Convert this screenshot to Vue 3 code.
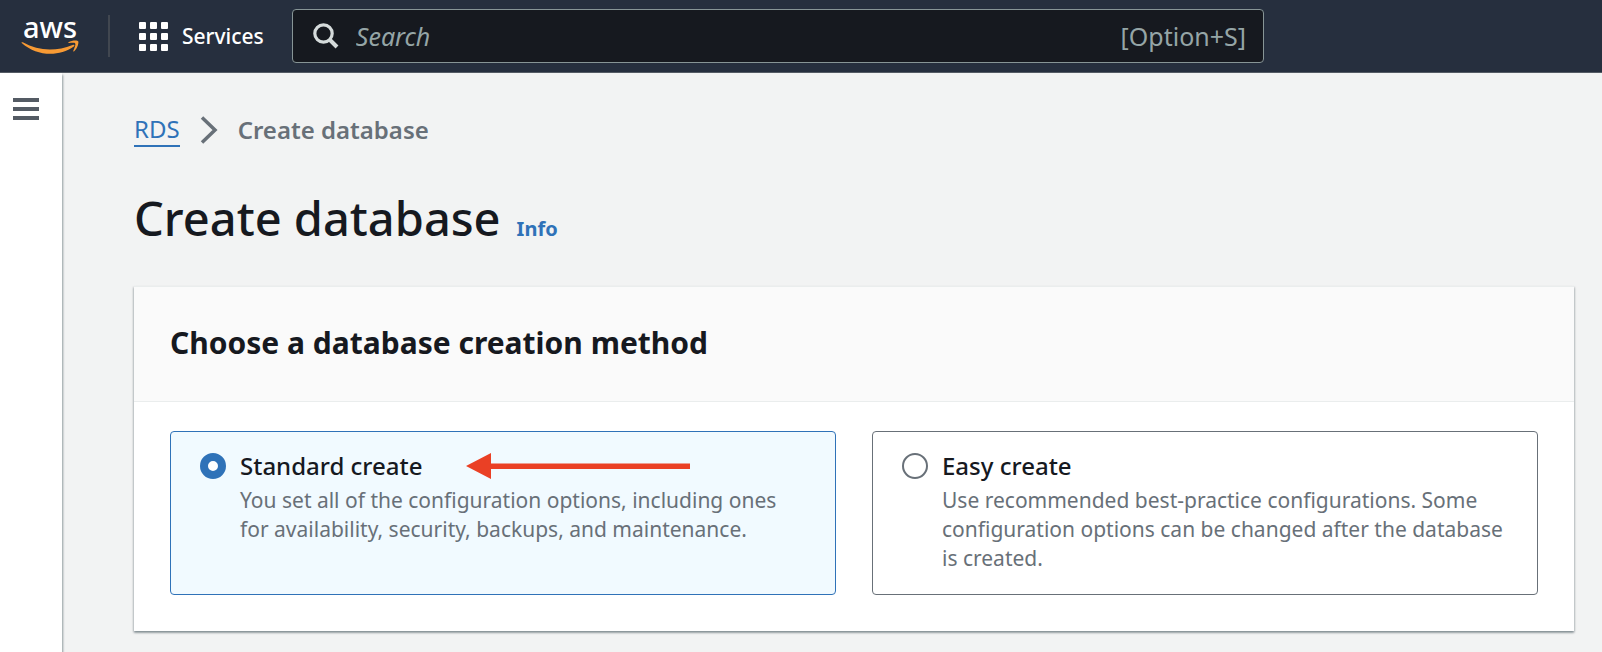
<script setup>
import { ref } from 'vue'

const method = ref('standard')
const query = ref('')
const options = [
  {
    id: 'standard',
    title: 'Standard create',
    text: 'You set all of the configuration options, including ones for availability, security, backups, and maintenance.',
  },
  {
    id: 'easy',
    title: 'Easy create',
    text: 'Use recommended best-practice configurations. Some configuration options can be changed after the database is created.',
  },
]
const cells = [0, 11, 22]
</script>

<template>
  <div class="page">
    <header class="topbar">
      <a class="logo" href="#" aria-label="AWS home">
        <svg width="58" height="68" viewBox="0 -14 58 68">
          <text class="logo-text" x="29" y="22" text-anchor="middle">aws</text>
          <path d="M1 27.200C0 26.500.8 25.800 1.800 26.300C18 35.400 35 35.600 51.600 28.900C53.200 28.300 54.200 29.500 52.800 30.500C37.500 41.300 15.500 40 1 27.200Z" fill="#f79a34" />
          <path d="M47.500 26.300C50.500 24.200 56.500 24 57.200 25.200C58 26.700 56.500 32.500 53.200 35.200C52.500 35.800 52 35.500 52.300 34.700C53.200 32.500 55 28.500 54.200 27.400C53.400 26.500 50 27 48.200 27.100C47.300 27.200 47 26.700 47.500 26.300Z" fill="#f79a34" />
        </svg>
      </a>
      <span class="divider"></span>
      <button class="services" type="button">
        <svg width="30" height="29" viewBox="0 0 30 29" fill="#fff">
          <template v-for="y in cells" :key="y">
            <rect v-for="x in cells" :key="x" :x="x" :y="y" width="7" height="7" rx="1" />
          </template>
        </svg>
        Services
      </button>
      <div class="search">
        <svg width="26" height="26" viewBox="0 0 26 26" fill="none" stroke="#d5dbdb">
          <circle cx="10.500" cy="10.500" r="8.700" stroke-width="3.200" />
          <path d="M16.500 16.500L24 24" stroke-width="4" />
        </svg>
        <input v-model="query" type="search" placeholder="Search" aria-label="Search" />
        <span class="shortcut">[Option+S]</span>
      </div>
      <div class="tools"></div>
    </header>

    <div class="body">
      <aside class="rail">
        <button type="button" aria-label="Open navigation">
          <svg width="26" height="22" viewBox="0 0 26 22" fill="#545b64">
            <rect width="26" height="4" />
            <rect y="9" width="26" height="4" />
            <rect y="18" width="26" height="4" />
          </svg>
        </button>
      </aside>

      <main class="content">
        <nav class="crumbs" aria-label="Breadcrumb">
          <a href="#">RDS</a>
          <svg width="18" height="28" viewBox="0 0 18 28" fill="none" stroke="#687078" stroke-width="3.500">
            <path d="M2 1.500L15 14L2 26.500" />
          </svg>
          <span>Create database</span>
        </nav>

        <div class="heading">
          <h1>Create database</h1>
          <a href="#">Info</a>
        </div>

        <section class="card">
          <div class="card-head">
            <h2 id="method-title">Choose a database creation method</h2>
          </div>
          <div class="tiles" role="radiogroup" aria-labelledby="method-title">
            <label
              v-for="o in options"
              :key="o.id"
              class="tile"
              :class="{ selected: method === o.id }"
              :for="o.id"
            >
              <input :id="o.id" v-model="method" type="radio" name="method" :value="o.id" />
              <span class="tile-body">
                <span class="tile-title">{{ o.title }}</span>
                <span class="tile-text">{{ o.text }}</span>
              </span>
              <svg v-if="o.id === 'standard'" class="arrow" width="224" height="26" viewBox="0 0 224 26" fill="#ea4025">
                <path d="M0 13L25 0V10.500H224V16H25V26Z" />
              </svg>
            </label>
          </div>
        </section>
      </main>
    </div>
  </div>
</template>

<style>
body {
  margin: 0;
  background: #f2f3f3;
}
</style>

<style scoped>
.page {
  min-height: 100vh;
  display: flex;
  flex-direction: column;
  box-sizing: border-box;
  background: #f2f3f3;
  color: #16191f;
  font-family: "Noto Sans", "Open Sans", sans-serif;
}
.page * {
  box-sizing: border-box;
}
button {
  border: 0;
  padding: 0;
  background: none;
  font-family: inherit;
  cursor: pointer;
}
svg {
  display: block;
  flex: none;
}
a {
  color: #2f72b8;
  text-decoration: none;
}
.topbar {
  display: flex;
  align-items: center;
  height: 73px;
  padding-left: 21px;
  border-bottom: 1px solid #545b64;
  background: #262f3e;
}
.logo-text {
  fill: #fff;
  font-size: 29px;
  font-weight: 500;
}
.divider {
  width: 2px;
  height: 42px;
  margin: 0 29px;
  background: #414750;
}
.services {
  display: flex;
  align-items: center;
  gap: 13px;
  margin-right: 28px;
  color: #fff;
  font-size: 21px;
  font-weight: 500;
}
.search {
  flex: 1;
  display: flex;
  align-items: center;
  min-width: 0;
  height: 54px;
  padding: 0 17px 0 20px;
  border: 1px solid #879596;
  border-radius: 4px;
  background: #16191f;
  color: #95a5a6;
  font-size: 25px;
}
.search input {
  flex: 1;
  min-width: 0;
  margin-left: 17px;
  padding: 0;
  border: 0;
  outline: 0;
  background: none;
  color: #fff;
  font: inherit;
}
.search input::placeholder {
  color: #95a5a6;
  font-style: italic;
  opacity: 1;
}
.tools {
  flex: 0 1 338px;
}
.body {
  flex: 1;
  display: flex;
}
.rail {
  flex: none;
  width: 62px;
  padding: 25px 0 0 13px;
  background: #fff;
  box-shadow: 1px 2px 2px rgba(0, 28, 36, 0.4);
}
.content {
  flex: 1;
  min-width: 0;
  padding: 40px 28px 20px 72px;
}
.crumbs {
  display: flex;
  align-items: center;
  height: 34px;
  font-size: 24px;
  line-height: 32px;
}
.crumbs a {
  border-bottom: 2px solid #2f72b8;
}
.crumbs svg {
  margin: 0 20px;
}
.crumbs span {
  color: #687078;
  font-weight: 600;
}
.heading {
  display: flex;
  align-items: baseline;
  gap: 16px;
  margin: 36px 0 32px;
}
h1 {
  margin: 0;
  font-size: 47px;
  font-weight: 500;
  line-height: 71px;
}
.heading a {
  font-size: 20px;
  font-weight: 700;
}
.card {
  border-top: 1px solid #eaeded;
  background: #fff;
  box-shadow:
    0 2px 2px rgba(0, 28, 36, 0.3),
    1px 1px 2px rgba(0, 28, 36, 0.15),
    -1px 1px 2px rgba(0, 28, 36, 0.15);
}
.card-head {
  padding: 34px 36px 36px;
  border-bottom: 1px solid #eaeded;
  background: #fafafa;
}
h2 {
  margin: 0;
  font-size: 30px;
  font-weight: 700;
  line-height: 44px;
}
.tiles {
  display: grid;
  grid-template-columns: 1fr 1fr;
  gap: 36px;
  padding: 29px 36px 36px;
}
.tile {
  position: relative;
  display: flex;
  align-items: flex-start;
  gap: 14px;
  padding: 16px 28px 21px 29px;
  border: 1px solid #687078;
  border-radius: 4px;
  cursor: pointer;
}
.tile.selected {
  border-color: #2f72b8;
  background: #f1faff;
}
.tile input {
  appearance: none;
  flex: none;
  width: 26px;
  height: 26px;
  margin: 5px 0 0;
  border: 2px solid #687078;
  border-radius: 50%;
  background: #fff;
}
.tile input:checked {
  border: 8px solid #2f72b8;
}
.tile-body {
  display: flex;
  flex-direction: column;
  gap: 2px;
}
.tile-title {
  font-size: 24px;
  font-weight: 500;
  line-height: 36px;
}
.tile-text {
  color: #687078;
  font-size: 21px;
  line-height: 29px;
}
.arrow {
  position: absolute;
  top: 21px;
  left: 295px;
}
</style>
